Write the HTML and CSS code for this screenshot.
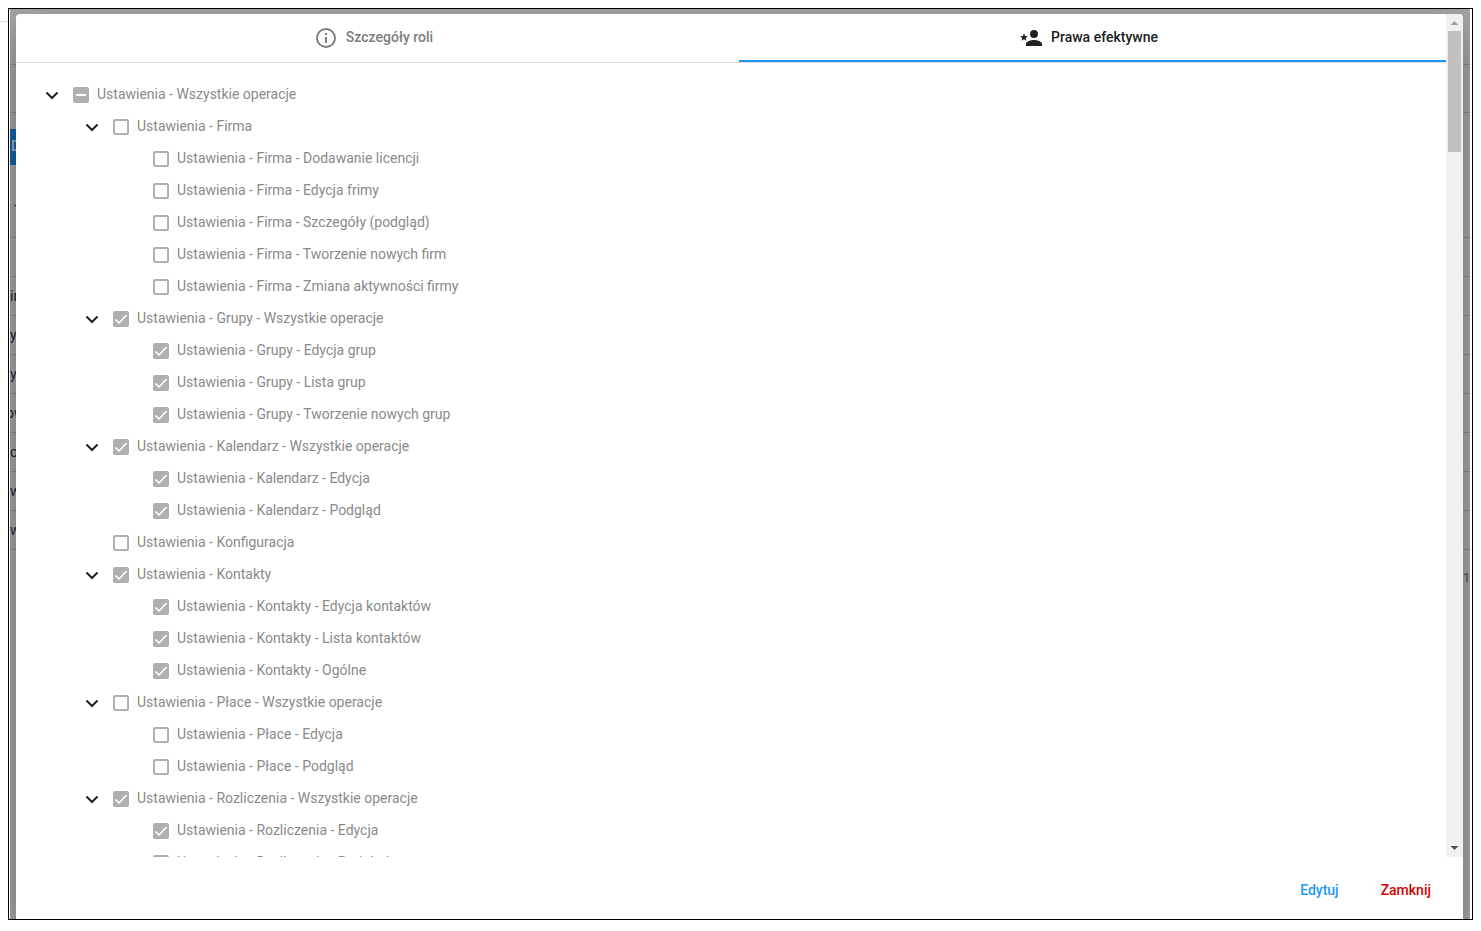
FILE: index.html
```
<!DOCTYPE html>
<html lang="pl">
<head>
<meta charset="utf-8">
<title>Prawa efektywne</title>
<link rel="stylesheet" href="styles.css">
</head>
<body>
<div class="edge-line"></div>
<div class="frame">
<div class="viewport">
  <div class="backdrop" aria-hidden="true">
    <div class="bg-bar"></div>
    <div class="bg-head"></div>
    <div class="bg-tools"><span class="bg-button">D</span><span class="bg-mark">-</span></div>
    <div class="bg-row"></div>
    <div class="bg-row">in</div>
    <div class="bg-row link">y</div>
    <div class="bg-row link">y</div>
    <div class="bg-row shifted">ow</div>
    <div class="bg-row">o</div>
    <div class="bg-row link">w</div>
    <div class="bg-row link">w</div>
    <div class="bg-pager">1</div>
  </div>
  <div class="dialog" role="dialog" aria-label="Prawa efektywne">
    <div class="scroll-area">
      <div class="content">
        <div class="tabs" role="tablist">
          <button class="tab" role="tab" type="button" aria-selected="false">
            <svg class="tab-icon" viewBox="0 0 24 24"><path d="M11 9h2V7h-2m1 13c-4.41 0-8-3.59-8-8s3.59-8 8-8 8 3.590 8 8-3.590 8-8 8m0-18a10 10 0 1 0 0 20 10 10 0 0 0 0-20m-1 15h2v-6h-2v6z"/></svg>
            <span>Szczegóły roli</span>
          </button>
          <button class="tab active" role="tab" type="button" aria-selected="true">
            <svg class="tab-icon" viewBox="0 0 24 24"><path d="M15 4a4 4 0 1 0 0 8 4 4 0 0 0 0-8m0 10c-2.670 0-8 1.330-8 4v2h16v-2c0-2.670-5.330-4-8-4M5 13.300l2.400 1.500-.65-2.800L9 10.200l-2.900-.25L5 7.300 3.900 9.950 1 10.200l2.200 1.800-.65 2.800L5 13.300z"/></svg>
            <span>Prawa efektywne</span>
          </button>
        </div>
        <ul class="tree" id="tree"></ul>
      </div>
      <div class="scrollbar" aria-hidden="true">
        <svg class="arrow up" viewBox="0 0 17 17"><path d="M8.500 7 12.500 11h-8z"/></svg>
        <div class="thumb"></div>
        <svg class="arrow down" viewBox="0 0 17 17"><path d="M4.500 6h8L8.500 10z"/></svg>
      </div>
    </div>
    <div class="actions">
      <button class="action edit" type="button">Edytuj</button>
      <button class="action close" type="button">Zamknij</button>
    </div>
  </div>
</div>
</div>
<script src="tree.js"></script>
</body>
</html>
```
FILE: styles.css
```
* { box-sizing: border-box; }
body {
  margin: 8px;
  background: #fff;
  font-family: Roboto, "Liberation Sans", sans-serif;
  font-size: 14px;
  overflow: hidden;
}
button { border: 0; background: none; font: inherit; padding: 0; }
ul { list-style: none; margin: 0; padding: 0; }

.edge-line { position: absolute; left: 0; top: 21px; width: 8px; height: 1px; background: #dedede; }
.frame {
  height: calc(100vh - 19px);
  border: 1px solid #000;
  padding: 0 2px 0 1px;
}
.viewport {
  position: relative;
  height: 100%;
  padding: 5px 7px 0 6px;
  background: #a8a8a8;
  overflow: hidden;
}

.backdrop { position: absolute; inset: 0; color: #1c1c1c; }
.bg-bar, .bg-head, .bg-tools, .bg-row { border-bottom: 1px solid #8c8c8c; }
.bg-bar { height: 56px; }
.bg-head { height: 48px; }
.bg-tools { height: 125px; padding-top: 16px; }
.bg-button {
  display: block;
  width: 80px;
  height: 36px;
  padding-left: 1px;
  background: #1565a8;
  color: #a0b4c8;
  line-height: 34px;
  font-weight: 500;
}
.bg-mark { display: block; padding: 32px 0 0 4px; line-height: 16px; }
.bg-row { height: 39px; line-height: 38px; }
.bg-row.link { color: #17243d; }
.bg-row.shifted { text-indent: -4px; }
.bg-pager { padding-top: 20px; line-height: 16px; font-size: 12px; text-align: right; color: #444; }

.dialog {
  position: relative;
  display: flex;
  flex-direction: column;
  height: 100%;
  background: #fff;
  border-radius: 4px 4px 0 0;
  box-shadow: 0 11px 15px -7px rgba(0,0,0,.2), 0 24px 38px 3px rgba(0,0,0,.14), 0 9px 46px 8px rgba(0,0,0,.12);
  overflow: hidden;
}
.scroll-area { flex: 1; min-height: 0; display: flex; }
.content { flex: 1; min-width: 0; overflow: hidden; }

.tabs { display: flex; height: 49px; border-bottom: 1px solid #dedede; }
.tab {
  position: relative;
  flex: 1;
  display: flex;
  align-items: center;
  justify-content: center;
  gap: 8px;
  color: #7d7d7d;
  font-weight: 500;
  line-height: 46px;
}
.tab span { padding-bottom: 2px; }
.tab.active { color: #212121; }
.tab.active::after {
  content: "";
  position: absolute;
  left: 8px;
  right: 0;
  bottom: 0;
  height: 2px;
  background: #2196f3;
}
.tab-icon { width: 24px; height: 24px; fill: currentColor; }

.tree { padding: 15px 0 0 24px; }
.tree .tree { padding: 0 0 0 40px; }
.node { display: flex; align-items: center; height: 32px; }
.toggle { width: 24px; height: 24px; margin-right: 9px; }
.toggle svg { display: block; width: 24px; height: 24px; padding-top: 2px; fill: none; stroke: #212121; stroke-width: 2; }
.check {
  appearance: none;
  width: 16px;
  height: 16px;
  margin: 2px 8px 0 0;
  border: 2px solid #b0b0b0;
  border-radius: 2px;
  background: #fff center / 16px 16px no-repeat;
}
.check:checked {
  background-color: #b0b0b0;
  background-image: url("data:image/svg+xml,%3Csvg xmlns='http://www.w3.org/2000/svg' viewBox='0 0 16 16'%3E%3Cpath d='M2.500 8.500 6 12l7.500-8' fill='none' stroke='white' stroke-width='1.600'/%3E%3C/svg%3E");
}
.check:indeterminate {
  background-color: #b0b0b0;
  background-image: url("data:image/svg+xml,%3Csvg xmlns='http://www.w3.org/2000/svg' viewBox='0 0 16 16'%3E%3Cpath d='M3 8h10' stroke='white' stroke-width='2'/%3E%3C/svg%3E");
}
.node label { color: #8a8a8a; line-height: 32px; white-space: nowrap; }

.scrollbar { display: flex; flex-direction: column; align-items: center; width: 17px; background: #f0f0f0; }
.arrow { width: 17px; height: 17px; fill: #a0a0a0; }
.arrow.down { margin-top: auto; fill: #505050; }
.thumb { width: 13px; height: 121px; background: #c1c1c1; }

.actions { display: flex; justify-content: flex-end; gap: 10px; padding: 15px 16px 11px; }
.action { height: 36px; padding: 0 16px; font-weight: 500; }
.edit { color: #2196f3; }
.close { color: #d50000; }
```
FILE: tree.js
```
// s: 1 = checked, 0 = unchecked, -1 = partially checked
const leaf = (t, s) => ({ t, s, c: [] });
const group = (t, s, prefix, names) => ({ t, s, c: names.map(n => leaf(prefix + ' - ' + n, s)) });
const data = [{
  t: 'Ustawienia - Wszystkie operacje', s: -1, c: [
    group('Ustawienia - Firma', 0, 'Ustawienia - Firma', ['Dodawanie licencji', 'Edycja frimy', 'Szczegóły (podgląd)', 'Tworzenie nowych firm', 'Zmiana aktywności firmy']),
    group('Ustawienia - Grupy - Wszystkie operacje', 1, 'Ustawienia - Grupy', ['Edycja grup', 'Lista grup', 'Tworzenie nowych grup']),
    group('Ustawienia - Kalendarz - Wszystkie operacje', 1, 'Ustawienia - Kalendarz', ['Edycja', 'Podgląd']),
    leaf('Ustawienia - Konfiguracja', 0),
    group('Ustawienia - Kontakty', 1, 'Ustawienia - Kontakty', ['Edycja kontaktów', 'Lista kontaktów', 'Ogólne']),
    group('Ustawienia - Płace - Wszystkie operacje', 0, 'Ustawienia - Płace', ['Edycja', 'Podgląd']),
    group('Ustawienia - Rozliczenia - Wszystkie operacje', 1, 'Ustawienia - Rozliczenia', ['Edycja', 'Podgląd'])
  ]
}];

let count = 0;
function render(items, list) {
  for (const item of items) {
    const li = document.createElement('li');
    const id = 'perm' + (count++);
    const toggle = item.c.length
      ? '<button class="toggle" type="button" aria-label="Zwiń"><svg viewBox="0 0 24 22"><path d="M6.500 8.500 12 14l5.500-5.500"/></svg></button>'
      : '<span class="toggle"></span>';
    li.innerHTML = '<div class="node">' + toggle +
      '<input class="check" type="checkbox" disabled id="' + id + '"><label for="' + id + '">' + item.t + '</label></div>';
    const box = li.querySelector('input');
    box.checked = item.s === 1;
    box.indeterminate = item.s === -1;
    if (item.c.length) {
      const sub = document.createElement('ul');
      sub.className = 'tree';
      render(item.c, sub);
      li.appendChild(sub);
    }
    list.appendChild(li);
  }
}
render(data, document.getElementById('tree'));
```
